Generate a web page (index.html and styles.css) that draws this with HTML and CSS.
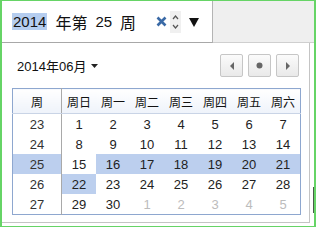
FILE: index.html
```html
<!DOCTYPE html>
<html lang="zh-CN">
<head>
<meta charset="utf-8">
<link rel="stylesheet" href="styles.css">
</head>
<body>
<div class="frame">
  <div class="top">
    <div class="field">
      <span class="seg num sel">2014</span>
      <span class="seg cjk">年第</span>
      <span class="seg num">25</span>
      <span class="seg cjk">周</span>
      <span class="controls">
        <span class="clear"><svg width="11" height="11" viewBox="0 0 11 11"><path d="M1.5 1.5 L9.5 9.5 M9.5 1.5 L1.5 9.5" stroke="#3a6aa6" stroke-width="2.6" stroke-linecap="butt"/></svg></span>
        <span class="spin"><svg width="11" height="22" viewBox="0 0 11 22"><path d="M3 8 L5.5 5 L8 8" fill="none" stroke="#555" stroke-width="1.2"/><path d="M3 14 L5.5 17 L8 14" fill="none" stroke="#555" stroke-width="1.2"/></svg></span>
        <span class="drop"><svg width="10" height="9" viewBox="0 0 10 9"><path d="M0 0 H10 L5 9 Z" fill="#111"/></svg></span>
      </span>
    </div>
    <div class="rest"></div>
  </div>
  <div class="popup">
    <div class="cal-head">
      <div class="month">2014年06月 <svg class="caret" width="7" height="4" viewBox="0 0 7 4"><path d="M0 0 H7 L3.5 4 Z" fill="#222"/></svg></div>
      <div class="navs">
        <button class="nav"><svg width="6" height="8" viewBox="0 0 6 8"><path d="M5 0 V8 L1 4 Z" fill="#666"/></svg></button>
        <button class="nav"><svg width="7" height="7" viewBox="0 0 7 7"><circle cx="3.5" cy="3.5" r="3" fill="#666"/></svg></button>
        <button class="nav"><svg width="6" height="8" viewBox="0 0 6 8"><path d="M1 0 V8 L5 4 Z" fill="#666"/></svg></button>
      </div>
    </div>
    <table class="cal">
      <thead>
        <tr><th class="wk">周</th><th>周日</th><th>周一</th><th>周二</th><th>周三</th><th>周四</th><th>周五</th><th>周六</th></tr>
      </thead>
      <tbody>
        <tr><td class="wk">23</td><td>1</td><td>2</td><td>3</td><td>4</td><td>5</td><td>6</td><td>7</td></tr>
        <tr><td class="wk">24</td><td>8</td><td>9</td><td>10</td><td>11</td><td>12</td><td>13</td><td>14</td></tr>
        <tr><td class="wk hl">25</td><td>15</td><td class="hl">16</td><td class="hl">17</td><td class="hl">18</td><td class="hl">19</td><td class="hl">20</td><td class="hl">21</td></tr>
        <tr><td class="wk">26</td><td class="hl">22</td><td>23</td><td>24</td><td>25</td><td>26</td><td>27</td><td>28</td></tr>
        <tr><td class="wk">27</td><td>29</td><td>30</td><td class="out">1</td><td class="out">2</td><td class="out">3</td><td class="out">4</td><td class="out">5</td></tr>
      </tbody>
    </table>
  </div>
  <div class="peek"></div>
</div>
</body>
</html>
```

FILE: styles.css
```css
html, body {
  margin: 0;
  padding: 0;
  background: #ffffff;
}

.frame {
  position: relative;
  width: 316px;
  height: 227px;
  box-sizing: border-box;
  border: 1px solid #66d466;
  border-left-width: 2px;
  border-right-width: 2px;
  overflow: hidden;
  background: #ffffff;
}

.top {
  display: flex;
  height: 42px;
}

.field {
  width: 211px;
  box-sizing: border-box;
  border-right: 1px solid #b4b4b4;
  border-bottom: 1px solid #a8a8a8;
  display: flex;
  align-items: center;
  padding-left: 10px;
  gap: 8px;
  background: #ffffff;
}

.seg {
  color: #111;
  line-height: 16px;
}

.num {
  font-family: "Liberation Sans", Arial, sans-serif;
  font-size: 15px;
}

.cjk {
  font-family: "Noto Sans CJK SC", sans-serif;
  font-size: 16px;
}

.sel {
  background: #b5cdef;
  padding: 0 1px;
  line-height: 17px;
}

.controls {
  display: flex;
  align-items: center;
  margin-left: 12px;
}

.clear {
  display: flex;
}

.spin {
  display: flex;
  margin-left: 3px;
  background: #f0f0f0;
  height: 22px;
}

.drop {
  display: flex;
  margin-left: 8px;
  padding-top: 1px;
}

.rest {
  flex: 1;
  background: #efefef;
  border-bottom: 1px solid #cfcfcf;
}

.popup {
  width: 308px;
  height: 180px;
  box-sizing: border-box;
  border: 1px solid #c4c4c4;
  border-left: none;
  border-top: none;
  background: #ffffff;
  padding: 11px 10px 0 15px;
}

.cal-head {
  display: flex;
  justify-content: space-between;
  align-items: center;
  height: 23px;
}

.month {
  font-family: "Liberation Sans", "Noto Sans CJK SC", sans-serif;
  font-size: 13px;
  color: #111;
  display: flex;
  align-items: center;
}

.caret {
  margin-left: 5px;
}

.navs {
  display: flex;
  gap: 5px;
}

.nav {
  width: 23px;
  height: 23px;
  padding: 0;
  margin: 0;
  border: 1px solid #c6c6c6;
  border-radius: 2px;
  background: linear-gradient(#fbfbfb, #e9e9e9);
  display: flex;
  align-items: center;
  justify-content: center;
}

.cal {
  margin: 11px 0 0 -5px;
  border-collapse: collapse;
  border: 1px solid #8ea7cf;
  table-layout: fixed;
  width: 288px;
  font-family: "Liberation Sans", "Noto Sans CJK SC", sans-serif;
  color: #222;
}

.cal th {
  height: 24px;
  padding: 0;
  font-family: "Noto Sans CJK SC", sans-serif;
  font-size: 12px;
  font-weight: normal;
  color: #111;
  background: linear-gradient(#ffffff, #eef3fa);
  border-bottom: 1px solid #c9d4e6;
  width: 34px;
}

.cal th.wk,
.cal td.wk {
  width: 48px;
  border-right: 1px solid #a9a9a9;
}

.cal td {
  height: 20px;
  padding: 0;
  text-align: center;
  font-size: 13px;
  color: #222;
}

.cal td.wk {
  color: #333;
}

.cal td.hl {
  background: #bccfee;
}

.cal td.out {
  color: #bcbcbc;
}

.peek {
  position: absolute;
  right: 0;
  top: 186px;
  width: 1px;
  height: 26px;
  background: #4a5a4a;
}
```
